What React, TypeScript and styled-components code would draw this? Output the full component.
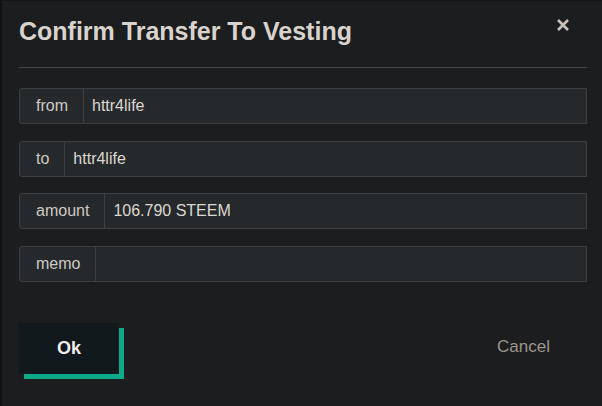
import React from "react";
import styled, { createGlobalStyle } from "styled-components";

const Global = createGlobalStyle`
  html, body { margin: 0; padding: 0; background: #1c1d1f; }
  body { font-family: "Liberation Sans", Arial, sans-serif; }
  * { box-sizing: border-box; }
`;

const Modal = styled.div`
  width: 602px;
  height: 406px;
  background: #1c1d1f;
  border-left: 2px solid #101112;
  border-top: 1px solid #141517;
  padding: 0 15px 0 17px;
  display: flex;
  flex-direction: column;
`;

const Header = styled.div`
  display: flex;
  justify-content: space-between;
  align-items: flex-start;
  height: 67px;
  border-bottom: 1px solid #45474a;
`;

const Title = styled.h1`
  margin: 16px 0 0 0;
  font-size: 25px;
  font-weight: 700;
  color: #d9d3cd;
  letter-spacing: 0;
`;

const Close = styled.button`
  background: none;
  border: none;
  padding: 0;
  margin: 16px 16px 0 0;
  width: 16px;
  height: 16px;
  display: flex;
  align-items: center;
  justify-content: center;
  cursor: pointer;
`;

const Fields = styled.div`
  display: flex;
  flex-direction: column;
  gap: 16.5px;
  margin-top: 20px;
`;

const Group = styled.div`
  display: flex;
  height: 36px;
  border: 1px solid #3b4043;
  border-radius: 3px 0 0 3px;
  background: #25292b;
`;

const Addon = styled.span`
  display: flex;
  align-items: center;
  padding: 0 15px 0 16px;
  border-right: 1px solid #3b4043;
  color: #cfc9c3;
  font-size: 16px;
`;

const Value = styled.span`
  display: flex;
  align-items: center;
  padding-left: 8px;
  color: #dcd7d2;
  font-size: 16px;
  flex: 1;
`;

const Footer = styled.div`
  display: flex;
  justify-content: space-between;
  align-items: center;
  margin-top: 41px;
  padding-right: 37px;
`;

const OkButton = styled.button`
  width: 100px;
  height: 51px;
  background: #11191c;
  border: none;
  box-shadow: 5px 5px 0 #0aab86;
  color: #f0eeec;
  font-family: "Liberation Sans", Arial, sans-serif;
  font-weight: 700;
  font-size: 18px;
  cursor: pointer;
`;

const CancelButton = styled.button`
  background: none;
  border: none;
  color: #9c968f;
  font-family: "Liberation Sans", Arial, sans-serif;
  font-size: 17px;
  padding: 0;
  margin-top: -2px;
  cursor: pointer;
`;

const rows: { label: string; value: string }[] = [
  { label: "from", value: "httr4life" },
  { label: "to", value: "httr4life" },
  { label: "amount", value: "106.790 STEEM" },
  { label: "memo", value: "" },
];

export default function App() {
  return (
    <>
      <Global />
      <Modal>
        <Header>
          <Title>Confirm Transfer To Vesting</Title>
          <Close aria-label="close">
            <svg width="14" height="14" viewBox="0 0 14 14">
              <path d="M2 2 L12 12 M12 2 L2 12" stroke="#c9c2bb" strokeWidth="2.6" strokeLinecap="butt" />
            </svg>
          </Close>
        </Header>
        <Fields>
          {rows.map((r) => (
            <Group key={r.label}>
              <Addon>{r.label}</Addon>
              <Value>{r.value}</Value>
            </Group>
          ))}
        </Fields>
        <Footer>
          <OkButton>Ok</OkButton>
          <CancelButton>Cancel</CancelButton>
        </Footer>
      </Modal>
    </>
  );
}
